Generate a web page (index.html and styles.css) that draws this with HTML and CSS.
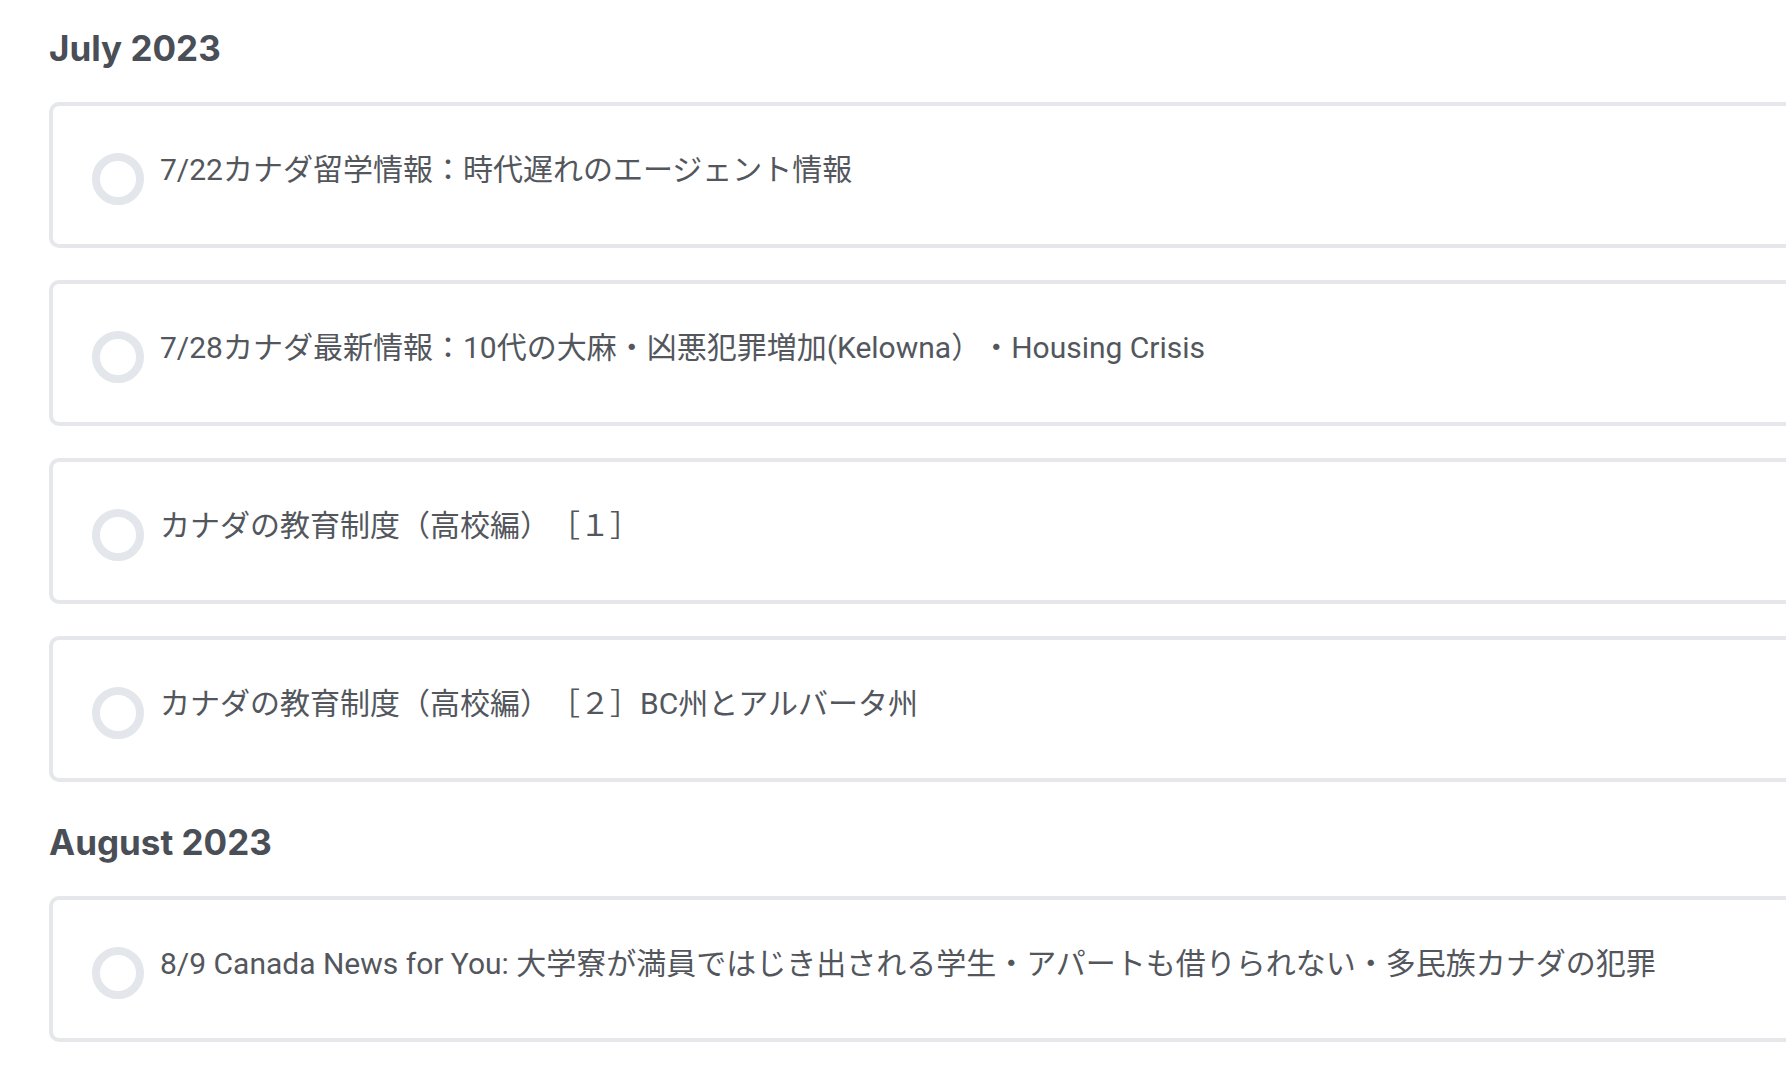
FILE: index.html
```html
<!DOCTYPE html>
<html lang="ja">
<head>
<meta charset="utf-8">
<title>Archive</title>
<link rel="stylesheet" href="styles.css">
</head>
<body>
<main class="page">
  <section class="month">
    <h2 class="month-title">July 2023</h2>
    <ul class="list">
      <li class="card"><span class="check"></span><span class="title">7/22カナダ留学情報：時代遅れのエージェント情報</span></li>
      <li class="card"><span class="check"></span><span class="title">7/28カナダ最新情報：10代の大麻・凶悪犯罪増加(Kelowna）・Housing Crisis</span></li>
      <li class="card"><span class="check"></span><span class="title">カナダの教育制度（高校編）［１］</span></li>
      <li class="card"><span class="check"></span><span class="title">カナダの教育制度（高校編）［２］BC州とアルバータ州</span></li>
    </ul>
  </section>
  <section class="month">
    <h2 class="month-title">August 2023</h2>
    <ul class="list">
      <li class="card"><span class="check"></span><span class="title">8/9 Canada News for You: 大学寮が満員ではじき出される学生・アパートも借りられない・多民族カナダの犯罪</span></li>
    </ul>
  </section>
</main>
</body>
</html>
```
FILE: styles.css
```css
html, body {
  margin: 0;
  padding: 0;
  overflow: hidden;
  background: #ffffff;
}

.page {
  padding: 28px 0 0 49px;
  font-family: Inter, Roboto, "Noto Sans CJK JP", sans-serif;
}

.month + .month {
  margin-top: 40px;
}

.month-title {
  margin: 0 0 34px;
  font-size: 35px;
  line-height: 40px;
  font-weight: 700;
  color: #4a4e57;
}

.list {
  list-style: none;
  margin: 0;
  padding: 0;
  width: 1800px;
  display: flex;
  flex-direction: column;
  gap: 32px;
}

.card {
  display: flex;
  align-items: flex-start;
  border: 4px solid #e5e7eb;
  border-radius: 10px;
  padding: 38px 40px 38px 39px;
  box-sizing: border-box;
  height: 146px;
}

.check {
  flex: none;
  width: 52px;
  height: 52px;
  box-sizing: border-box;
  border: 8px solid #e3e6ea;
  border-radius: 50%;
  margin-top: 9px;
  margin-right: 16px;
}

.title {
  padding-top: 3px;
  font-family: Roboto, "Noto Sans CJK JP", sans-serif;
  font-size: 30px;
  line-height: 45px;
  color: #53575d;
  white-space: nowrap;
  text-spacing-trim: space-all;
}
```
